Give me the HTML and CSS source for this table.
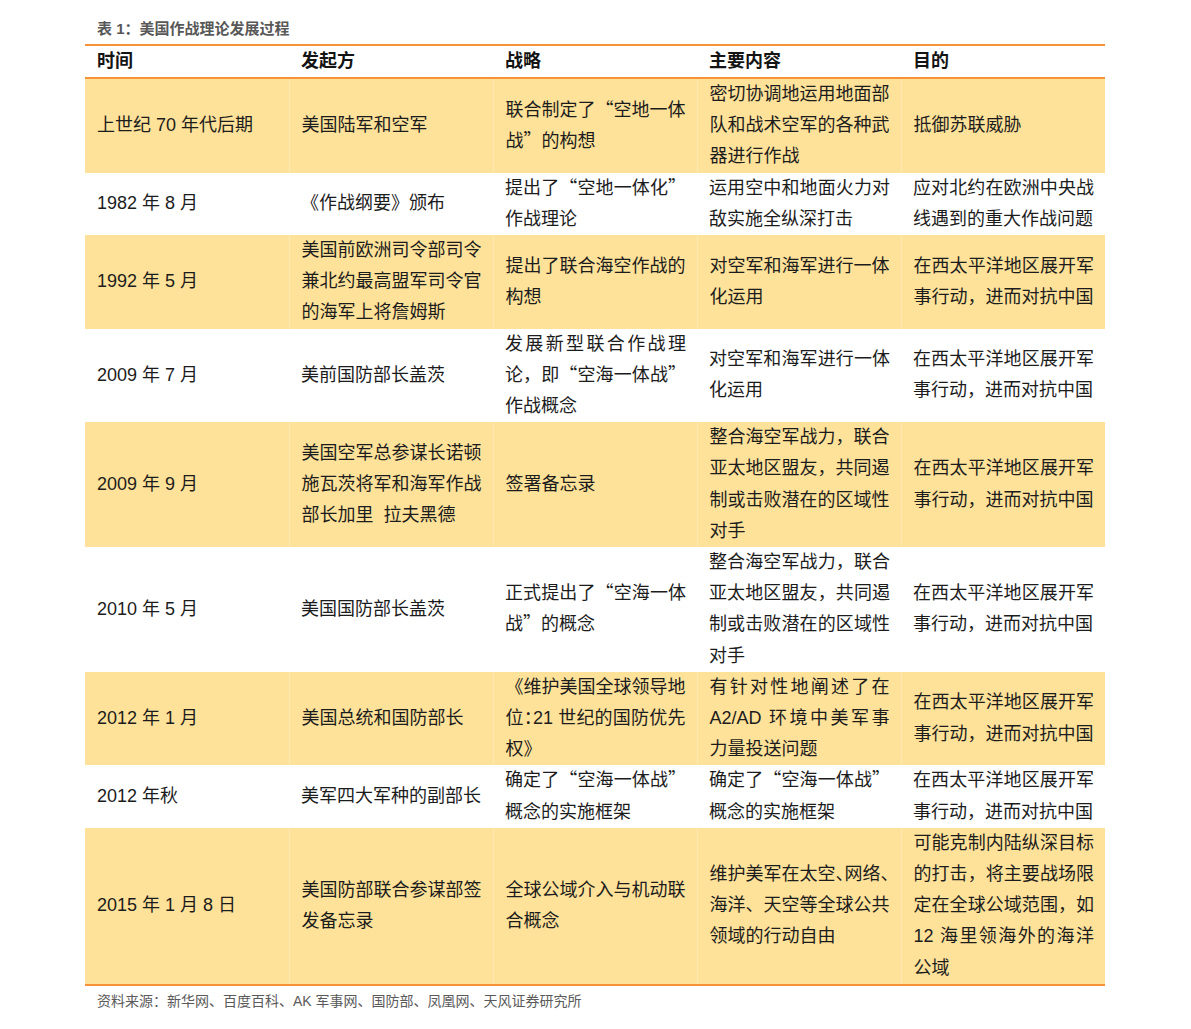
FILE: index.html
```html
<!DOCTYPE html>
<html lang="zh-CN">
<head>
<meta charset="utf-8">
<title>表 1：美国作战理论发展过程</title>
<link rel="stylesheet" href="styles.css">
</head>
<body>
<div class="page">
  <div class="caption">表 1：美国作战理论发展过程</div>
  <table class="grid">
    <colgroup><col><col><col><col><col></colgroup>
    <thead>
      <tr><th>时间</th><th>发起方</th><th>战略</th><th>主要内容</th><th>目的</th></tr>
    </thead>
    <tbody>
      <tr class="hl">
        <td>上世纪 70 年代后期</td>
        <td>美国陆军和空军</td>
        <td>联合制定了<span class="q">“</span>空地一体战<span class="q">”</span>的构想</td>
        <td>密切协调地运用地面部队和战术空军的各种武器进行作战</td>
        <td>抵御苏联威胁</td>
      </tr>
      <tr>
        <td>1982 年 8 月</td>
        <td>《作战纲要》颁布</td>
        <td>提出了<span class="q">“</span>空地一体化<span class="q">”</span>作战理论</td>
        <td>运用空中和地面火力对敌实施全纵深打击</td>
        <td>应对北约在欧洲中央战线遇到的重大作战问题</td>
      </tr>
      <tr class="hl">
        <td>1992 年 5 月</td>
        <td>美国前欧洲司令部司令兼北约最高盟军司令官的海军上将詹姆斯</td>
        <td>提出了联合海空作战的构想</td>
        <td>对空军和海军进行一体化运用</td>
        <td>在西太平洋地区展开军事行动，进而对抗中国</td>
      </tr>
      <tr>
        <td>2009 年 7 月</td>
        <td>美前国防部长盖茨</td>
        <td>发展新型联合作战理论，即<span class="q">“</span>空海一体战<span class="q">”</span>作战概念</td>
        <td>对空军和海军进行一体化运用</td>
        <td>在西太平洋地区展开军事行动，进而对抗中国</td>
      </tr>
      <tr class="hl">
        <td>2009 年 9 月</td>
        <td>美国空军总参谋长诺顿施瓦茨将军和海军作战部长加里&nbsp; 拉夫黑德</td>
        <td>签署备忘录</td>
        <td>整合海空军战力，联合亚太地区盟友，共同遏制或击败潜在的区域性对手</td>
        <td>在西太平洋地区展开军事行动，进而对抗中国</td>
      </tr>
      <tr>
        <td>2010 年 5 月</td>
        <td>美国国防部长盖茨</td>
        <td>正式提出了<span class="q">“</span>空海一体战<span class="q">”</span>的概念</td>
        <td>整合海空军战力，联合亚太地区盟友，共同遏制或击败潜在的区域性对手</td>
        <td>在西太平洋地区展开军事行动，进而对抗中国</td>
      </tr>
      <tr class="hl">
        <td>2012 年 1 月</td>
        <td>美国总统和国防部长</td>
        <td>《维护美国全球领导地位<span class="h">：</span>21 世纪的国防优先权》</td>
        <td>有针对性地阐述了在A2/AD 环境中美军事力量投送问题</td>
        <td>在西太平洋地区展开军事行动，进而对抗中国</td>
      </tr>
      <tr>
        <td>2012 年秋</td>
        <td>美军四大军种的副部长</td>
        <td>确定了<span class="q">“</span>空海一体战<span class="q">”</span>概念的实施框架</td>
        <td>确定了<span class="q">“</span>空海一体战<span class="q">”</span>概念的实施框架</td>
        <td>在西太平洋地区展开军事行动，进而对抗中国</td>
      </tr>
      <tr class="hl">
        <td>2015 年 1 月 8 日</td>
        <td>美国防部联合参谋部签发备忘录</td>
        <td>全球公域介入与机动联合概念</td>
        <td>维护美军在太空<span class="h">、</span>网络<span class="h">、</span>海洋、天空等全球公共领域的行动自由</td>
        <td>可能克制内陆纵深目标的打击，将主要战场限定在全球公域范围，如12 海里领海外的海洋公域</td>
      </tr>
    </tbody>
  </table>
  <div class="source">资料来源：新华网、百度百科、AK 军事网、国防部、凤凰网、天风证券研究所</div>
</div>
</body>
</html>
```

FILE: styles.css
```css
html, body {
  margin: 0;
  padding: 0;
  background: #ffffff;
}

body {
  font-family: "Liberation Sans", "Noto Sans CJK SC", sans-serif;
  color: #1c1c1c;
}

.page {
  width: 1020px;
  margin-left: 85px;
  padding-top: 19px;
}

.caption {
  padding-left: 12px;
  font-size: 15px;
  line-height: 20px;
  font-weight: bold;
  color: #585858;
  margin-bottom: 5px;
}

.grid {
  width: 1020px;
  table-layout: fixed;
  border-collapse: collapse;
  border-top: 2px solid #f79239;
  border-bottom: 2px solid #f79239;
}

.grid col {
  width: 204px;
}

.grid th {
  text-align: left;
  font-size: 18px;
  font-weight: bold;
  line-height: 31px;
  height: 31px;
  padding: 0 11px 0 12px;
  border-bottom: 2px solid #f79239;
  color: #141414;
}

.grid td {
  font-size: 18px;
  line-height: 31.2px;
  padding: 0 11px 0 12px;
  vertical-align: middle;
  text-align: justify;
  word-break: normal;
}

.grid tr.hl td {
  background: #ffe299;
}

.grid tr.hl td + td {
  border-left: 1px solid #ffe8b2;
}

.q {
  font-family: "Noto Sans CJK SC", sans-serif;
  line-height: 1;
}

.h {
  font-family: "Noto Sans CJK SC", sans-serif;
  font-feature-settings: "halt" 1;
  line-height: 1;
}

.source {
  padding-left: 12px;
  margin-top: 5px;
  font-size: 14px;
  line-height: 20px;
  color: #5a5a5a;
}
```
